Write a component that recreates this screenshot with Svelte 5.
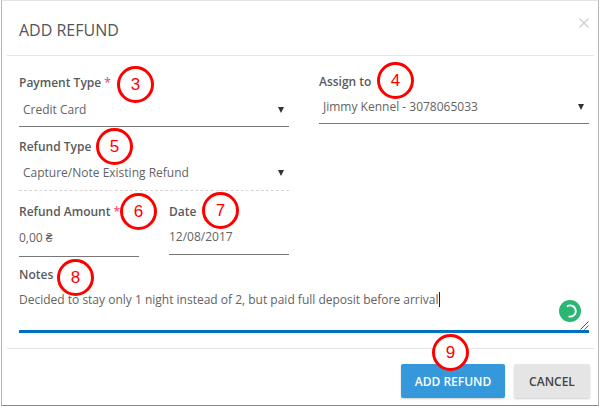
<script>
  const callouts = [
    { n: 3, x: 117, y: 66 },
    { n: 4, x: 377, y: 62 },
    { n: 5, x: 96, y: 128 },
    { n: 6, x: 120, y: 193 },
    { n: 7, x: 202, y: 192 },
    { n: 8, x: 57, y: 259 },
    { n: 9, x: 432, y: 334 }
  ];
</script>

<div class="modal">
  <header>
    <h1>ADD REFUND</h1>
    <svg class="close" width="10" height="10" viewBox="0 0 10 10">
      <path d="M0.5 0.5 L9.5 9.5 M9.5 0.5 L0.5 9.5" stroke="#ccc" stroke-width="1.2" fill="none" />
    </svg>
  </header>

  <div class="body">
    <div class="cols">
      <div class="col">
        <div class="field payment">
          <div class="label">Payment Type <span class="req">*</span></div>
          <div class="select"><span>Credit Card</span><i></i></div>
        </div>
        <div class="field refund-type">
          <div class="label">Refund Type</div>
          <div class="select dashed"><span>Capture/Note Existing Refund</span><i></i></div>
        </div>
        <div class="pair">
          <div class="field amount">
            <div class="label">Refund Amount <span class="req">*</span></div>
            <div class="value">0,00 ₴</div>
          </div>
          <div class="field date">
            <div class="label">Date</div>
            <div class="value">12/08/2017</div>
          </div>
        </div>
      </div>
      <div class="col">
        <div class="field assign">
          <div class="label">Assign to</div>
          <div class="select"><span>Jimmy Kennel - 3078065033</span><i></i></div>
        </div>
      </div>
    </div>

    <div class="notes">
      <div class="label">Notes</div>
      <div class="note-box">
        <span class="note-text">Decided to stay only 1 night instead of 2, but paid full deposit before arrival</span><span class="caret"></span>
        <span class="spinner">
          <svg width="22" height="22" viewBox="0 0 22 22">
            <circle cx="11" cy="11" r="11" fill="#2bb673" />
            <path d="M8 6.4 A5.6 5.6 0 1 1 9.6 16.4" fill="none" stroke="#fff" stroke-width="1.8" />
          </svg>
        </span>
        <svg class="grip" width="9" height="9" viewBox="0 0 9 9">
          <path d="M0.5 8.5 L8.5 0.5 M4.5 8.5 L8.5 4.5" stroke="#555" stroke-width="1" />
        </svg>
      </div>
    </div>
  </div>

  <footer>
    <button class="primary">ADD REFUND</button>
    <button class="cancel">CANCEL</button>
  </footer>
</div>

{#each callouts as c}
  <div class="callout" style="left: {c.x}px; top: {c.y}px">{c.n}</div>
{/each}

<style>
  :global(body) {
    background: #fff;
    font-family: "Open Sans", sans-serif;
  }
  .modal {
    box-sizing: border-box;
    width: 598px;
    height: 406px;
    margin-left: 1px;
    background: #fff;
    border: 1px solid #b5b5b5;
    border-top-color: #e4e4e4;
    border-bottom-color: #8c8c8c;
    padding: 0 4px 0 5px;
    color: #636363;
  }
  header {
    height: 54px;
    border-bottom: 1px solid #e6e6e6;
    padding: 0 5px 0 12px;
    display: flex;
    justify-content: space-between;
    position: relative;
  }
  h1 {
    margin: 19px 0 0;
    font-size: 16px;
    line-height: 20px;
    font-weight: 400;
    color: #555;
  }
  .close {
    position: absolute;
    right: 5px;
    top: 17px;
  }
  .body {
    height: 293px;
    padding: 0 5px 0 12px;
    box-sizing: border-box;
    border-bottom: 1px solid #e6e6e6;
  }
  .cols {
    display: grid;
    grid-template-columns: 270px 270px;
    column-gap: 30px;
  }
  .label {
    font-size: 12px;
    line-height: 16px;
    font-weight: 600;
    color: #5a5a5a;
  }
  .req {
    color: #f0527a;
  }
  .select {
    display: flex;
    justify-content: space-between;
    align-items: center;
    font-size: 12px;
    line-height: 16px;
    padding: 11px 5px 8px 4px;
    border-bottom: 1px solid #777;
  }
  .assign .select {
    padding: 9px 5px 8px 4px;
  }
  .select.dashed {
    padding: 10px 5px 9px 4px;
    border-bottom: 1px dashed #d5d5d5;
  }
  .select i {
    width: 0;
    height: 0;
    border-left: 3px solid transparent;
    border-right: 3px solid transparent;
    border-top: 6px solid #333;
  }
  .payment {
    padding-top: 19px;
  }
  .assign {
    padding-top: 18px;
  }
  .refund-type {
    padding-top: 12px;
  }
  .pair {
    display: grid;
    grid-template-columns: 120px 120px;
    column-gap: 30px;
  }
  .amount {
    padding-top: 13px;
  }
  .date {
    padding-top: 13px;
    align-self: start;
  }
  .value {
    font-size: 12px;
    line-height: 16px;
    padding: 10px 0 10px;
    border-bottom: 1px solid #777;
  }
  .date .value {
    padding: 9px 0 9px;
  }
  .notes {
    padding-top: 10px;
  }
  .note-box {
    position: relative;
    box-sizing: border-box;
    height: 49px;
    margin-top: 1px;
    padding-top: 8px;
    border-bottom: 3px solid #0070c0;
    font-size: 12px;
    line-height: 16px;
    white-space: nowrap;
  }
  .caret {
    display: inline-block;
    width: 1px;
    height: 15px;
    background: #222;
    vertical-align: -3px;
  }
  .spinner {
    position: absolute;
    right: 8px;
    top: 16px;
    height: 22px;
  }
  .grip {
    position: absolute;
    right: 0;
    bottom: 0;
  }
  footer {
    display: flex;
    justify-content: flex-end;
    gap: 9px;
    padding: 15px 4px 0 0;
  }
  button {
    height: 34px;
    border: 0;
    border-radius: 2px;
    font-family: "Open Sans", sans-serif;
    font-size: 12px;
    padding: 0;
    box-shadow: 0 1px 2px rgba(0, 0, 0, 0.2);
  }
  .primary {
    width: 104px;
    background: #3498db;
    color: #fff;
    font-weight: 600;
  }
  .cancel {
    width: 76px;
    background: #e5e5e5;
    color: #444;
    font-weight: 600;
  }
  .callout {
    position: absolute;
    box-sizing: border-box;
    width: 37px;
    height: 37px;
    border: 3px solid #f00;
    border-radius: 50%;
    background: #fff;
    color: #f00;
    font-family: "Liberation Sans", sans-serif;
    font-size: 17px;
    display: flex;
    align-items: center;
    justify-content: center;
  }
</style>
